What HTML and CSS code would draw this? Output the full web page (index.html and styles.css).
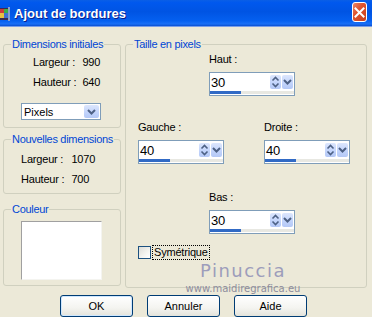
FILE: index.html
```html
<!DOCTYPE html>
<html lang="fr">
<head>
    <meta charset="UTF-8">
    <title>Ajout de bordures</title>
    <link rel="stylesheet" href="styles.css">
</head>
<body>
    <div class="window">
        <div class="titlebar">
            <span class="app-icon">
                <svg width="11" height="14" viewBox="0 0 11 14">
                    <rect x="0" y="1" width="10" height="12" fill="#3a2a50"/>
                    <rect x="1" y="2" width="4" height="4" fill="#d23a3a"/>
                    <rect x="5" y="2" width="4" height="4" fill="#3ab04a"/>
                    <rect x="1" y="6" width="4" height="5" fill="#e8c040"/>
                    <rect x="5" y="6" width="4" height="5" fill="#4070d0"/>
                    <rect x="9" y="0" width="2" height="14" fill="#8aa0c8"/>
                </svg>
            </span>
            <span class="title">Ajout de bordures</span>
            <span class="close">
                <svg width="11" height="11" viewBox="0 0 11 11">
                    <path d="M1.5 1.5 L9.5 9.5 M9.5 1.5 L1.5 9.5" stroke="#fff" stroke-width="2" stroke-linecap="square"/>
                </svg>
            </span>
        </div>

        <div class="content">
            <div class="columns">
                <div class="left">
                    <fieldset class="group g-init">
                        <legend>Dimensions initiales</legend>
                        <div class="dims dims-init">
                            <span class="k">Largeur :</span><span class="v">990</span>
                            <span class="k">Hauteur :</span><span class="v">640</span>
                        </div>
                        <div class="select">
                            <span class="select-text">Pixels</span>
                            <span class="drop-btn">
                                <svg width="9" height="6" viewBox="0 0 9 6"><path d="M1 1 L4.5 4.5 L8 1" fill="none" stroke="#4d6185" stroke-width="2"/></svg>
                            </span>
                        </div>
                    </fieldset>

                    <fieldset class="group g-new">
                        <legend>Nouvelles dimensions</legend>
                        <div class="dims dims-new">
                            <span class="k">Largeur :</span><span class="v">1070</span>
                            <span class="k">Hauteur :</span><span class="v">700</span>
                        </div>
                    </fieldset>

                    <fieldset class="group g-color">
                        <legend>Couleur</legend>
                        <div class="swatch"></div>
                    </fieldset>
                </div>

                <fieldset class="group g-size">
                    <legend>Taille en pixels</legend>

                    <div class="field f-haut">
                        <div class="lbl">Haut :</div>
                        <div class="spin">
                            <div class="spin-top">
                                <span class="spin-val">30</span>
                                <span class="spin-btn">
                                    <svg width="9" height="12" viewBox="0 0 9 12"><path d="M1.5 4.5 L4.5 1.5 L7.5 4.5 M1.5 7.5 L4.5 10.5 L7.5 7.5" fill="none" stroke="#4d6185" stroke-width="1.6"/></svg>
                                </span>
                                <span class="spin-btn">
                                    <svg width="9" height="6" viewBox="0 0 9 6"><path d="M1 1 L4.5 4.5 L8 1" fill="none" stroke="#4d6185" stroke-width="2"/></svg>
                                </span>
                            </div>
                            <div class="spin-bar"><span class="spin-fill"></span></div>
                        </div>
                    </div>

                    <div class="pair">
                        <div class="field">
                            <div class="lbl">Gauche :</div>
                            <div class="spin">
                                <div class="spin-top">
                                    <span class="spin-val">40</span>
                                    <span class="spin-btn">
                                        <svg width="9" height="12" viewBox="0 0 9 12"><path d="M1.5 4.5 L4.5 1.5 L7.5 4.5 M1.5 7.5 L4.5 10.5 L7.5 7.5" fill="none" stroke="#4d6185" stroke-width="1.6"/></svg>
                                    </span>
                                    <span class="spin-btn">
                                        <svg width="9" height="6" viewBox="0 0 9 6"><path d="M1 1 L4.5 4.5 L8 1" fill="none" stroke="#4d6185" stroke-width="2"/></svg>
                                    </span>
                                </div>
                                <div class="spin-bar"><span class="spin-fill"></span></div>
                            </div>
                        </div>
                        <div class="field">
                            <div class="lbl">Droite :</div>
                            <div class="spin">
                                <div class="spin-top">
                                    <span class="spin-val">40</span>
                                    <span class="spin-btn">
                                        <svg width="9" height="12" viewBox="0 0 9 12"><path d="M1.5 4.5 L4.5 1.5 L7.5 4.5 M1.5 7.5 L4.5 10.5 L7.5 7.5" fill="none" stroke="#4d6185" stroke-width="1.6"/></svg>
                                    </span>
                                    <span class="spin-btn">
                                        <svg width="9" height="6" viewBox="0 0 9 6"><path d="M1 1 L4.5 4.5 L8 1" fill="none" stroke="#4d6185" stroke-width="2"/></svg>
                                    </span>
                                </div>
                                <div class="spin-bar"><span class="spin-fill"></span></div>
                            </div>
                        </div>
                    </div>

                    <div class="field f-bas">
                        <div class="lbl">Bas :</div>
                        <div class="spin">
                            <div class="spin-top">
                                <span class="spin-val">30</span>
                                <span class="spin-btn">
                                    <svg width="9" height="12" viewBox="0 0 9 12"><path d="M1.5 4.5 L4.5 1.5 L7.5 4.5 M1.5 7.5 L4.5 10.5 L7.5 7.5" fill="none" stroke="#4d6185" stroke-width="1.6"/></svg>
                                </span>
                                <span class="spin-btn">
                                    <svg width="9" height="6" viewBox="0 0 9 6"><path d="M1 1 L4.5 4.5 L8 1" fill="none" stroke="#4d6185" stroke-width="2"/></svg>
                                </span>
                            </div>
                            <div class="spin-bar"><span class="spin-fill"></span></div>
                        </div>
                    </div>

                    <label class="check">
                        <span class="check-box"></span>
                        <span class="check-text">Symétrique</span>
                    </label>

                    <div class="watermark">
                        <div class="wm-name">Pinuccia</div>
                        <div class="wm-url">www.maidiregrafica.eu</div>
                    </div>
                </fieldset>
            </div>

            <div class="buttons">
                <button class="btn btn-default">OK</button>
                <button class="btn">Annuler</button>
                <button class="btn">Aide</button>
            </div>
        </div>
    </div>
</body>
</html>
```

FILE: styles.css
```css
body {
    margin: 0;
    font-family: "Liberation Sans", Arial, sans-serif;
    font-size: 11px;
    color: #000;
    background-color: #ece9d8;
}
.window {
    width: 372px;
    height: 317px;
    overflow: hidden;
    background-color: #ece9d8;
}
.titlebar {
    height: 26px;
    display: flex;
    align-items: center;
    background: linear-gradient(to bottom, #0a5fe6 0%, #0058ee 10%, #0054e3 45%, #0560f0 80%, #1a6ff6 92%, #0a4fd0 100%);
    border-bottom: 1px solid #7a9ee8;
    position: relative;
}
.app-icon {
    display: flex;
    margin-left: -1px;
    margin-top: 1px;
}
.title {
    margin-left: 4px;
    font-family: "Liberation Sans", Arial, sans-serif;
    font-weight: bold;
    font-size: 13px;
    color: #fff;
    text-shadow: 1px 1px 0 #0a1e8a;
}
.close {
    position: absolute;
    left: 352px;
    top: 2px;
    width: 15px;
    height: 20px;
    box-sizing: border-box;
    border: 1px solid #fff;
    border-radius: 3px;
    background: linear-gradient(to bottom right, #e9876a 0%, #e0532e 40%, #c8401c 100%);
    display: flex;
    align-items: center;
    justify-content: center;
}
.content {
    padding: 11px 0 0 3px;
}
.columns {
    display: flex;
    gap: 4px;
}
.left {
    width: 118px;
    display: flex;
    flex-direction: column;
}
.group {
    margin: 0;
    padding: 0;
    border: 1px solid #d0d0bf;
    border-radius: 3px;
    box-sizing: border-box;
    min-width: 0;
}
.group legend {
    color: #0046d5;
    line-height: 13px;
    padding: 0 1px;
    margin-left: 7px;
    letter-spacing: -0.3px;
}
.g-init {
    height: 90px;
}
.g-new {
    margin-top: 5px;
    height: 61px;
}
.g-color {
    margin-top: 9px;
    height: 83px;
}
.dims {
    display: grid;
    grid-template-columns: auto auto;
    justify-content: start;
    column-gap: 6px;
    line-height: 20px;
    letter-spacing: -0.2px;
}
.dims-init {
    padding: 1px 0 0 29px;
}
.dims-new {
    padding: 3px 0 0 17px;
    column-gap: 7px;
}
.select {
    margin: 11px 0 0 17px;
    width: 80px;
    height: 17px;
    box-sizing: border-box;
    border: 1px solid #7f9db9;
    background-color: #fff;
    display: flex;
    align-items: center;
    justify-content: space-between;
}
.select-text {
    padding-left: 2px;
}
.drop-btn {
    width: 15px;
    height: 13px;
    margin-right: 1px;
    border-radius: 2px;
    background: linear-gradient(to bottom, #dce6fd 0%, #c1d3fb 60%, #b4c8f6 100%);
    display: flex;
    align-items: center;
    justify-content: center;
}
.swatch {
    margin: 5px 0 0 17px;
    width: 81px;
    height: 59px;
    box-sizing: border-box;
    background-color: #fff;
    border: 1px solid;
    border-color: #a0a0a0 #f4f4f0 #f4f4f0 #a0a0a0;
}
.g-size {
    width: 242px;
    height: 250px;
    position: relative;
}
.field {
    width: 86px;
}
.lbl {
    line-height: 13px;
    margin-bottom: 6px;
    letter-spacing: -0.2px;
}
.f-haut,
.f-bas {
    margin-left: 83px;
}
.f-haut {
    margin-top: 2px;
}
.pair {
    display: flex;
    justify-content: space-between;
    margin: 25px 0 0 12px;
    width: 212px;
}
.f-bas {
    margin-top: 27px;
}
.spin {
    width: 86px;
    height: 24px;
    box-sizing: border-box;
    border: 1px solid #7f9db9;
    background-color: #fff;
    display: flex;
    flex-direction: column;
}
.spin-top {
    flex: 1;
    display: flex;
    align-items: center;
    padding-right: 1px;
}
.spin-val {
    flex: 1;
    font-size: 13px;
    padding-left: 1px;
    letter-spacing: -0.3px;
}
.spin-btn {
    width: 11px;
    height: 14px;
    margin-left: 1px;
    border-radius: 2px;
    background: linear-gradient(to bottom, #dce6fd 0%, #c1d3fb 60%, #b4c8f6 100%);
    display: flex;
    align-items: center;
    justify-content: center;
}
.spin-bar {
    height: 3px;
    margin-bottom: 1px;
    background-color: #e8e8e2;
}
.spin-fill {
    display: block;
    width: 31px;
    height: 3px;
    background-color: #316ac5;
}
.check {
    display: flex;
    align-items: center;
    margin: 11px 0 0 12px;
}
.check-box {
    width: 13px;
    height: 13px;
    box-sizing: border-box;
    border: 1px solid #1c5180;
    background: linear-gradient(to bottom right, #dcdcd7 0%, #f4f4f0 60%, #fff 100%);
}
.check-text {
    margin-left: 1px;
    padding: 0 1px;
    line-height: 13px;
    border: 1px dotted #000;
    letter-spacing: -0.2px;
}
.watermark {
    position: absolute;
    left: 52px;
    top: 211px;
    width: 130px;
    text-align: center;
    color: #9a9ab6;
}
.wm-name {
    font-family: "DejaVu Sans", sans-serif;
    font-size: 18px;
    line-height: 18px;
    letter-spacing: 1.5px;
    color: #9d9dbb;
}
.wm-url {
    margin-top: 4px;
    font-family: "DejaVu Sans", sans-serif;
    font-size: 10px;
    line-height: 10px;
    color: #8c8c9c;
}
.buttons {
    display: flex;
    gap: 14px;
    margin: 7px 0 0 57px;
}
.btn {
    width: 73px;
    height: 22px;
    padding: 0;
    font-family: "Liberation Sans", Arial, sans-serif;
    font-size: 11px;
    color: #000;
    border: 1px solid #003c74;
    border-radius: 3px;
    background: linear-gradient(to bottom, #ffffff 0%, #f4f4f0 60%, #e3e3db 100%);
}
.btn-default {
    box-shadow: inset 0 0 0 1px #cee7ff;
}
```
